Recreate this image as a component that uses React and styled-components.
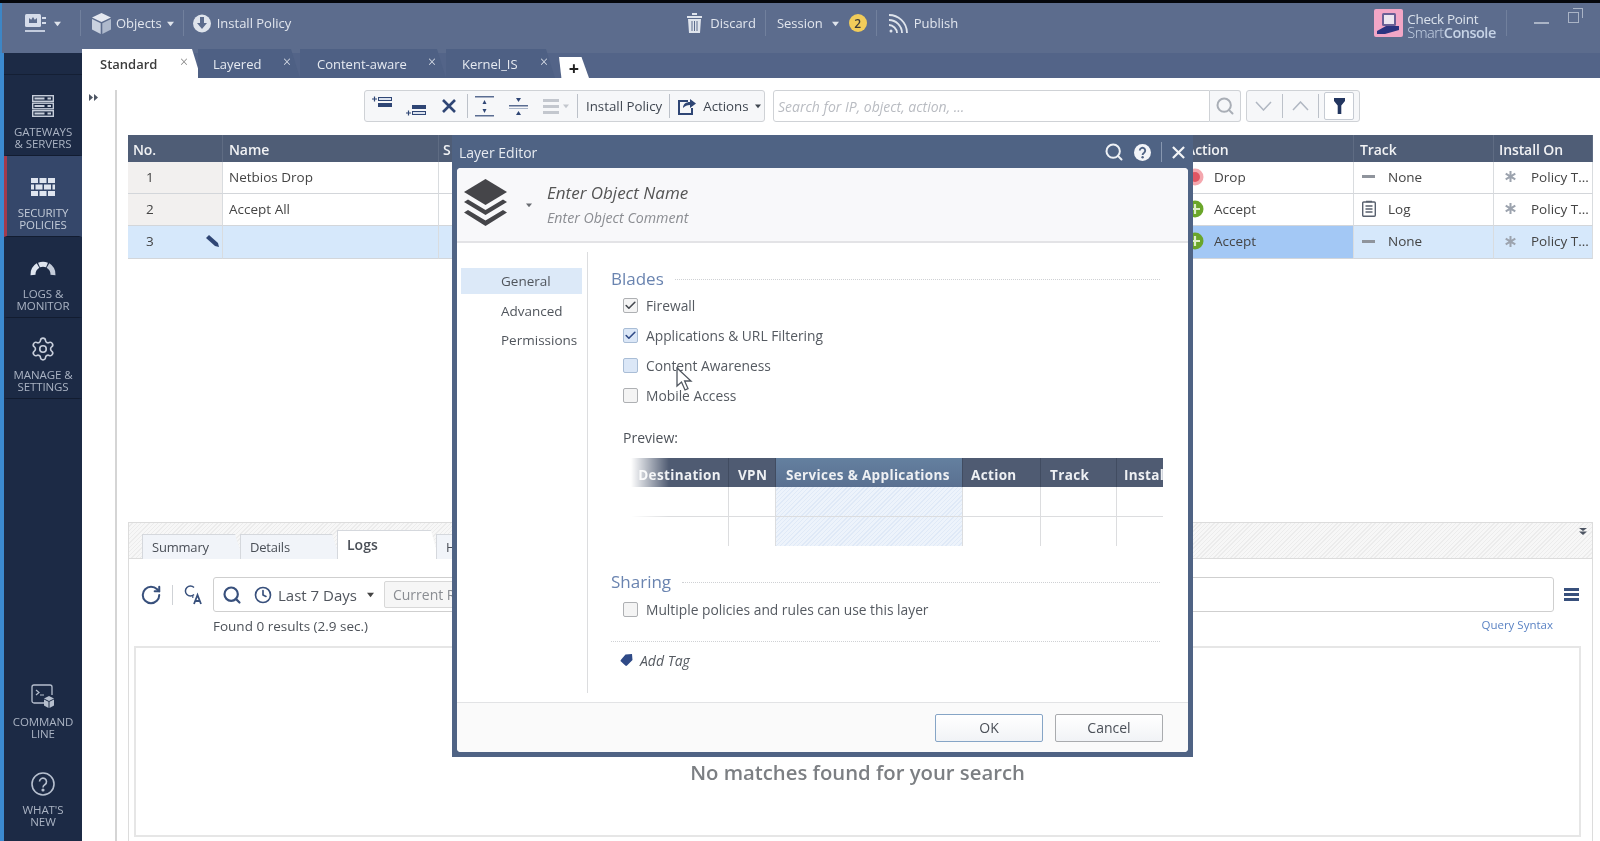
import React from "react";
import styled, { createGlobalStyle } from "styled-components";
import { Search, Clock, Settings, Check, RotateCw } from "lucide-react";

const FONT = `"Open Sans", "Noto Sans", "Liberation Sans", sans-serif`;

const GlobalStyle = createGlobalStyle`
  html, body {
    margin: 0;
    padding: 0;
    height: 100%;
    overflow: hidden;
    background: #fff;
  }
  * { box-sizing: border-box; }
`;

const Caret = ({ color = "#dfe4ec", size = 7 }) => (
  <svg width={size} height={size} viewBox="0 0 8 8">
    <path d="M0 2h8L4 7z" fill={color} />
  </svg>
);

const ConsoleIcon = () => (
  <svg width="22" height="19" viewBox="0 0 22 19">
    <rect x="0" y="0" width="16" height="13" rx="1.500" fill="#d5dcea" />
    <path d="M4 4l2.200 1.800L8 3l1.800 2.800L12 4v5H4z" fill="#5c6c8d" />
    <rect x="0" y="16" width="20" height="2" fill="#c3ccdd" />
    <rect x="17" y="3" width="4" height="2" fill="#d5dcea" />
    <rect x="17" y="8" width="4" height="2" fill="#d5dcea" />
  </svg>
);

const CubeIcon = () => (
  <svg width="19" height="21" viewBox="0 0 19 21">
    <path d="M9.500 0L19 4.500 9.500 9 0 4.500z" fill="#e4e8f0" />
    <path d="M0 6l8.700 4.200V21L0 16.400z" fill="#c9d1df" />
    <path d="M19 6l-8.700 4.200V21l8.700-4.600z" fill="#aeb9cc" />
  </svg>
);

const InstallIcon = () => (
  <svg width="18" height="19" viewBox="0 0 18 19">
    <circle cx="9" cy="9.500" r="9" fill="#dfe4ec" />
    <path d="M7 3h4v6h3l-5 6-5-6h3z" fill="#5c6c8d" />
  </svg>
);

const TrashIcon = () => (
  <svg width="15" height="20" viewBox="0 0 15 20">
    <path d="M5 2h5V0H5zM0 3h15v2H0zM1 6h13l-1 14H2z" fill="#dfe4ec" />
    <path d="M5 8v10M7.500 8v10M10 8v10" stroke="#5c6c8d" strokeWidth="1" />
  </svg>
);

const PublishIcon = () => (
  <svg width="21" height="20" viewBox="0 0 21 20" fill="none" stroke="#dfe4ec" strokeWidth="1.800">
    <path d="M1 2c9 0 18 7 18 18M1 7c7 0 13 6 13 13M1 12c4 0 8 4 8 8" />
    <circle cx="3" cy="18" r="1.500" fill="#dfe4ec" stroke="none" />
  </svg>
);

const LogoIcon = () => (
  <svg width="29" height="28" viewBox="0 0 29 28">
    <rect width="29" height="28" rx="2" fill="#f2a6c6" />
    <rect x="8" y="4" width="14" height="13" rx="1.500" fill="#6a5f96" />
    <rect x="10" y="6" width="10" height="9" fill="#ece6f0" />
    <path d="M3 22l9-5h13v4l-14 4-8 0z" fill="#2c3480" />
  </svg>
);

const GatewaysIcon = () => (
  <svg width="22" height="22" viewBox="0 0 22 22">
    {[0, 7.5, 15].map((y) => (
      <g key={y}>
        <rect x="0.700" y={y + 0.7} width="20.600" height="5.600" fill="none" stroke="#c6cdda" strokeWidth="1.400" />
        <rect x="2.500" y={y + 2.5} width="10" height="2" fill="#c6cdda" />
        <rect x="15.500" y={y + 2.5} width="3.500" height="2" fill="#c6cdda" />
      </g>
    ))}
  </svg>
);

const WallIcon = () => (
  <svg width="24" height="18" viewBox="0 0 24 18" fill="#dfe5ef">
    <rect x="0" y="0" width="7" height="5" />
    <rect x="8.500" y="0" width="7" height="5" />
    <rect x="17" y="0" width="7" height="5" />
    <rect x="0" y="6.500" width="3" height="5" />
    <rect x="4.500" y="6.500" width="7" height="5" />
    <rect x="13" y="6.500" width="7" height="5" />
    <rect x="21.500" y="6.500" width="2.500" height="5" />
    <rect x="0" y="13" width="7" height="5" />
    <rect x="8.500" y="13" width="7" height="5" />
    <rect x="17" y="13" width="7" height="5" />
  </svg>
);

const GaugeIcon = () => (
  <svg width="26" height="16" viewBox="0 0 26 16" fill="none" strokeWidth="5">
    <path d="M3 15A10.500 10.500 0 0 1 8 5.500" stroke="#dfe5ef" />
    <path d="M9 5A10.500 10.500 0 0 1 17 5" stroke="#dfe5ef" />
    <path d="M18 5.500A10.500 10.500 0 0 1 23 15" stroke="#c3cbd9" />
  </svg>
);

const TerminalIcon = () => (
  <svg width="24" height="24" viewBox="0 0 24 24" fill="none">
    <path d="M13 19H3a2 2 0 0 1-2-2V3a2 2 0 0 1 2-2h16a2 2 0 0 1 2 2v8" stroke="#b6bfce" strokeWidth="1.300" />
    <path d="M5 6l3 2.500L5 11M9 11h4" stroke="#b6bfce" strokeWidth="1.200" />
    <path d="M18 12l5 2.500-5 2.500-5-2.500z" fill="#b6bfce" />
    <path d="M13 15.500l4.500 2.200V24L13 21.500zM23 15.500l-4.500 2.200V24l4.500-2.500z" fill="#b6bfce" />
  </svg>
);

const HelpRingIcon = () => (
  <svg width="24" height="24" viewBox="0 0 24 24" fill="none" stroke="#b6bfce" strokeWidth="1.600">
    <circle cx="12" cy="12" r="11" />
    <path d="M8.500 9.500a3.500 3.500 0 1 1 5.500 3c-1.300.8-2 1.400-2 3" />
    <circle cx="12" cy="18" r="0.800" fill="#b6bfce" />
  </svg>
);

const AddRowIcon = ({ below }) => (
  <svg width="21" height="24" viewBox="0 0 21 24">
    {below ? (
      <>
        <rect x="6" y="11" width="14" height="4" fill="#2f4675" />
        <rect x="6.500" y="17.500" width="13" height="3" fill="#dbe2ee" stroke="#2f4675" />
        <path d="M0 19h5M2.500 16.500v5" stroke="#2f4675" strokeWidth="1.200" />
      </>
    ) : (
      <>
        <rect x="6.500" y="3.500" width="13" height="3" fill="#dbe2ee" stroke="#2f4675" />
        <rect x="6" y="9" width="14" height="4" fill="#2f4675" />
        <path d="M0 5h5M2.500 2.500v5" stroke="#2f4675" strokeWidth="1.200" />
      </>
    )}
  </svg>
);

const CrossIcon = ({ color = "#2f4675", size = 14, weight = 2.6 }) => (
  <svg width={size} height={size} viewBox="0 0 14 14">
    <path d="M1 1l12 12M13 1L1 13" stroke={color} strokeWidth={weight} />
  </svg>
);

const ExpandIcon = ({ collapse }) => (
  <svg width="19" height="21" viewBox="0 0 19 21" fill="#2f4675">
    {collapse ? (
      <>
        <path d="M9.500 6L7 2h5z" />
        <path d="M9.500 15L7 19h5z" />
        <rect x="0" y="9" width="19" height="1.500" fill="#5a6d92" />
        <rect x="0" y="12" width="19" height="1" fill="#a9b5c9" />
      </>
    ) : (
      <>
        <rect x="0" y="0" width="19" height="1.500" fill="#5a6d92" />
        <rect x="0" y="19" width="19" height="1.500" fill="#5a6d92" />
        <path d="M9.500 4L7.500 8h4z" />
        <path d="M9.500 17L7.500 13h4z" />
      </>
    )}
  </svg>
);

const ListIcon = () => (
  <svg width="16" height="15" viewBox="0 0 16 15" fill="#c3c7ce">
    <rect width="16" height="3" />
    <rect y="6" width="16" height="3" />
    <rect y="12" width="16" height="3" />
  </svg>
);

const ActionsIcon = () => (
  <svg width="19" height="18" viewBox="0 0 19 18" fill="none" stroke="#2f4675" strokeWidth="2">
    <path d="M10 4H1v13h13v-6" />
    <path d="M5 11c0-4 3-6 7-6V2l6 4.500L12 11V8c-3 0-5 1-7 3z" fill="#2f4675" stroke="none" />
  </svg>
);

const Chevron = ({ up }) => (
  <svg width="17" height="10" viewBox="0 0 17 10" fill="none" stroke="#b0b7c2" strokeWidth="1.500">
    <path d={up ? "M1 9l7.500-8L16 9" : "M1 1l7.500 8L16 1"} />
  </svg>
);

const FunnelIcon = () => (
  <svg width="11" height="16" viewBox="0 0 11 16" fill="#22355f">
    <path d="M0 0h11v3L7.300 7.500V16H3.700V7.500L0 3z" />
  </svg>
);

const PencilIcon = () => (
  <svg width="13" height="12" viewBox="0 0 13 12">
    <path d="M0 3L3 0l9 8 1 4-4-1z" fill="#2f4675" />
  </svg>
);

const DoubleTriangle = () => (
  <svg width="8" height="7" viewBox="0 0 8 7" fill="#4d5563">
    <path d="M0 0h8L4 3zM0 3.500h8L4 7z" />
  </svg>
);

const RailMark = () => (
  <svg width="9" height="7" viewBox="0 0 9 7" fill="#4d5563">
    <path d="M0 0l4 3.500L0 7zM5 0l4 3.500L5 7z" />
  </svg>
);

const ActionDot = ({ kind }) => (
  <svg width="18" height="18" viewBox="0 0 18 18">
    {kind === "drop" ? (
      <>
        <circle cx="9" cy="9" r="8.500" fill="#f4a7ae" />
        <circle cx="9" cy="9" r="5" fill="#e05563" />
      </>
    ) : (
      <>
        <circle cx="9" cy="9" r="8.500" fill="#6aa62a" />
        <path d="M9 4v10M4 9h10" stroke="#dff0c8" strokeWidth="2.200" />
      </>
    )}
  </svg>
);

const LogIcon = () => (
  <svg width="14" height="17" viewBox="0 0 14 17" fill="none" stroke="#58606e" strokeWidth="1.400">
    <rect x="0.700" y="2" width="12.600" height="14.300" rx="1" />
    <path d="M4 1.500h6M3.500 6h7M3.500 9h7M3.500 12h7" />
  </svg>
);

const StarIcon = () => (
  <svg width="11" height="11" viewBox="0 0 11 11" stroke="#9ca3ae" strokeWidth="2">
    <path d="M5.500 0v11M0.700 2.700l9.600 5.600M10.300 2.700L0.700 8.300" />
  </svg>
);

const HelpFilled = () => (
  <svg width="17" height="17" viewBox="0 0 17 17">
    <circle cx="8.500" cy="8.500" r="8.500" fill="#f2f4f8" />
    <path d="M5.800 6.500a2.700 2.700 0 1 1 4.300 2.200c-1 .7-1.500 1.100-1.500 2.300" stroke="#4f6384" strokeWidth="1.900" fill="none" />
    <circle cx="8.600" cy="13.300" r="1.200" fill="#4f6384" />
  </svg>
);

const LayersIcon = () => (
  <svg width="43" height="47" viewBox="0 0 43 47" fill="#454549">
    <path d="M21.500 0L43 13 21.500 26 0 13z" />
    <path d="M4 20.500l17.500 10.500L39 20.500l4 2.500-21.500 13L0 23z" />
    <path d="M4 31l17.500 10.500L39 31l4 2.500L21.500 47 0 33.500z" />
  </svg>
);

const TagIcon = () => (
  <svg width="13" height="12" viewBox="0 0 13 12">
    <path d="M5.500 0.500L12 0l.500 6L7 11.500a1.200 1.200 0 0 1-1.700 0L1 7.500a1.200 1.200 0 0 1 0-1.700z" fill="#2f4a87" />
  </svg>
);

const SearchLetterIcon = () => (
  <svg width="21" height="21" viewBox="0 0 21 21" fill="none" stroke="#38507c" strokeWidth="1.500">
    <path d="M11 3.500a5 5 0 1 0 0 7" />
    <path d="M9 13l1.500 0" />
    <path d="M11 20l3.500-9 3.500 9M12.200 17h4.600" strokeWidth="1.800" />
  </svg>
);

const PointerIcon = () => (
  <svg width="17" height="24" viewBox="0 0 17 24">
    <path d="M1 1v18l4.500-4 3.500 8 3-1.400-3.400-7.600H15z" fill="#fff" stroke="#50565f" strokeWidth="1.300" />
  </svg>
);

const Page = styled.div`
  position: relative;
  width: 1600px;
  height: 841px;
  overflow: hidden;
  display: flex;
  flex-direction: column;
  font-family: ${FONT};
  color: #444;
  background: #fff;
  filter: blur(0.45px);
`;

const TopEdge = styled.div`
  height: 3px;
  flex: none;
  background: #05070c;
`;

const Header = styled.header`
  height: 50px;
  flex: none;
  display: flex;
  align-items: center;
  padding: 0 0 10px 23px;
  background: #5c6c8d;
  border-left: 2px solid #3d86c6;
  color: #e2e6ee;
  font-size: 13px;
`;

const HeaderItem = styled.div`
  display: flex;
  align-items: center;
  gap: ${(p) => p.$gap || 5}px;
  margin-left: ${(p) => p.$ml || 0}px;
`;

const HeaderDivider = styled.span`
  width: 1px;
  height: 26px;
  margin-left: ${(p) => p.$ml || 0}px;
  background: #71809d;
`;

const Badge = styled.span`
  width: 18px;
  height: 18px;
  margin-left: ${(p) => p.$ml || 0}px;
  border-radius: 50%;
  background: #f1cc5a;
  color: #3b3b3b;
  font-size: 12px;
  font-weight: 600;
  display: flex;
  align-items: center;
  justify-content: center;
`;

const Brand = styled.div`
  width: 78px;
  margin: 6px 0 0 4px;
  display: flex;
  flex-direction: column;
  white-space: nowrap;
  color: #dbe2ec;
`;

const BrandLine = styled.span`
  height: 13px;
  font-size: 13.500px;
  line-height: 13px;
  letter-spacing: -0.3px;
  b {
    font-weight: 600;
  }
`;

const BrandThin = styled(BrandLine)`
  font-size: 14.500px;
  font-weight: 300;
  letter-spacing: -0.5px;
  color: #c6d3e6;
`;

const MinimizeBar = styled.span`
  width: 15px;
  height: 2px;
  margin-left: 27px;
  background: #aab4c6;
`;

const RestoreBox = styled.span`
  position: relative;
  width: 11px;
  height: 11px;
  margin: -12px 0 0 19px;
  border: 1px solid #aab4c6;
  &::after {
    content: "";
    position: absolute;
    top: -5px;
    right: -5px;
    width: 9px;
    height: 9px;
    border-top: 1px solid #aab4c6;
    border-right: 1px solid #aab4c6;
  }
`;

const Body = styled.div`
  flex: 1;
  min-height: 0;
  display: flex;
`;

const Sidebar = styled.nav`
  width: 82px;
  flex: none;
  display: flex;
  flex-direction: column;
  background: #1c2a45;
  border-left: 4px solid #3c8ad0;
`;

const SideTop = styled.div`
  height: 22px;
  flex: none;
  border-bottom: 1px solid #141f34;
`;

const SideItem = styled.div`
  height: 81px;
  flex: none;
  display: flex;
  flex-direction: column;
  align-items: center;
  padding-top: 20px;
  color: ${(p) => (p.$active ? "#c3cbd8" : "#aab3c3")};
  background: ${(p) => (p.$active ? "#35476a" : "transparent")};
  border-left: 3px solid ${(p) => (p.$active ? "#a33a4c" : "transparent")};
  border-right: 3px solid transparent;
  border-bottom: 1px solid ${(p) => (p.$plain ? "transparent" : "#121c30")};
  margin-bottom: ${(p) => (p.$plain ? 7 : 0)}px;
`;

const SideIcon = styled.div`
  height: 22px;
  display: flex;
  align-items: center;
  justify-content: center;
`;

const SideLabel = styled.div`
  margin-top: 9px;
  font-size: 11.500px;
  line-height: 12px;
  text-align: center;
  text-transform: uppercase;
  white-space: nowrap;
  letter-spacing: -0.1px;
`;

const SideSpacer = styled.div`
  flex: 1;
`;

const Main = styled.main`
  flex: 1;
  min-width: 0;
  display: flex;
  flex-direction: column;
`;

const TabStrip = styled.div`
  height: 29px;
  flex: none;
  margin-top: -4px;
  display: flex;
  background: linear-gradient(#5c6c8d 0 4px, #536488 4px);
`;

const Tab = styled.div`
  width: ${(p) => p.$w}px;
  margin-right: ${(p) => p.$overlap || 0}px;
  padding: 0 ${(p) => p.$pr}px 0 ${(p) => p.$pl}px;
  display: flex;
  align-items: center;
  justify-content: space-between;
  font-size: 13px;
  font-weight: ${(p) => (p.$active ? 600 : 400)};
  color: ${(p) => (p.$active ? "#3c3c3c" : "#e6eaf1")};
  background: ${(p) => (p.$active ? "#fff" : "#4e6084")};
  clip-path: polygon(0 0, calc(100% - 9px) 0, 100% 100%, 0 100%);
  span {
    font-size: 14px;
    font-weight: 300;
    margin-top: -4px;
    color: ${(p) => (p.$active ? "#777" : "#e6eaf1")};
  }
`;

const AddTab = styled.div`
  width: 30px;
  height: 21px;
  margin: 8px 0 0 4px;
  display: flex;
  align-items: center;
  justify-content: center;
  background: #fff;
  color: #222;
  font-size: 18px;
  font-weight: 700;
  clip-path: polygon(0 0, 75% 0, 100% 100%, 8% 100%);
`;

const Content = styled.div`
  flex: 1;
  min-height: 0;
  display: flex;
`;

const Rail = styled.div`
  width: 33px;
  flex: none;
  padding: 6px 0 0 7px;
`;

const Workspace = styled.div`
  flex: 1;
  min-width: 0;
  margin-top: 12px;
  padding: 0 7px 0 11px;
  border-left: 2px solid #d5d5d5;
  display: flex;
  flex-direction: column;
`;

const ToolRow = styled.div`
  height: 32px;
  flex: none;
  margin-left: 236px;
  display: flex;
  gap: 8px;
`;

const ToolBox = styled.div`
  display: flex;
  align-items: center;
  height: 32px;
  width: ${(p) => p.$w}px;
  margin-left: ${(p) => p.$ml || 0}px;
  background: #f6f7f9;
  border: 1px solid #cfd2d6;
  border-radius: 3px;
  font-size: 13.300px;
  color: #3f4650;
`;

const ToolSlot = styled.span`
  display: flex;
  align-items: center;
  margin-left: ${(p) => p.$ml || 0}px;
  gap: ${(p) => p.$gap || 0}px;
`;

const ToolDivider = styled.span`
  width: 1px;
  height: 24px;
  margin-left: ${(p) => p.$ml || 0}px;
  background: #bcc1c9;
`;

const SearchField = styled.div`
  flex: 1;
  height: 32px;
  display: flex;
  align-items: center;
  padding-left: 4px;
  background: #fff;
  border: 1px solid #cfd2d6;
  border-radius: 3px 0 0 3px;
  font-size: 14px;
  font-style: italic;
  color: #b9bcc2;
`;

const SearchGroup = styled.div`
  display: flex;
  width: 468px;
`;

const SearchButton = styled.div`
  width: 31px;
  display: flex;
  align-items: center;
  justify-content: center;
  background: #f6f7f9;
  border: 1px solid #cfd2d6;
  border-left: 0;
  border-radius: 0 3px 3px 0;
`;

const FilterButton = styled.span`
  width: 30px;
  height: 28px;
  margin-left: 5px;
  display: flex;
  align-items: center;
  justify-content: center;
  background: #fff;
  border: 1px solid #c6cbd3;
  border-radius: 2px;
`;

const RuleTable = styled.div`
  margin-top: 13px;
  flex: none;
  display: grid;
  grid-template-columns: 95px 216px 741px 174px 140px 99px;
  grid-template-rows: 27px 32px 32px 33px;
`;

const HeadCell = styled.div`
  display: flex;
  align-items: center;
  padding: 1px 0 0 ${(p) => p.$pl ?? 6}px;
  background: #4f5d76;
  color: #f1f2f4;
  font-size: 14px;
  font-weight: 600;
  letter-spacing: -0.1px;
  border-right: 1px solid #5f6c83;
`;

const Cell = styled.div`
  display: flex;
  align-items: center;
  gap: ${(p) => p.$gap || 0}px;
  padding: 0 0 2px ${(p) => p.$pl ?? 6}px;
  font-size: 13.500px;
  color: #444;
  background: ${(p) => p.$bg || "#fff"};
  border-right: 1px solid #d9dcdf;
  border-bottom: 1px solid #d3d6da;
`;

const NoNumber = styled.span`
  flex: 1;
`;

const PencilSlot = styled.span`
  display: flex;
  margin-right: 3px;
`;

const MinusBar = styled.span`
  width: 13px;
  height: 3px;
  background: #8f949c;
`;

const BottomPanel = styled.section`
  flex: 1;
  min-height: 0;
  margin-top: 263px;
  display: flex;
  flex-direction: column;
  border-left: 1px solid #dcdcdc;
  border-right: 1px solid #dcdcdc;
`;

const PanelBar = styled.div`
  height: 37px;
  flex: none;
  display: flex;
  align-items: flex-end;
  padding-left: 13px;
  border-top: 1px solid #dcdcdc;
  border-bottom: 1px solid #dcdcdc;
  background: repeating-linear-gradient(135deg, #f7f7f7 0 2px, #ececec 2px 3px);
`;

const PanelTab = styled.div`
  width: ${(p) => p.$w}px;
  height: ${(p) => (p.$active ? 29 : 25)}px;
  margin-right: -3px;
  margin-bottom: -1px;
  padding-left: 10px;
  display: flex;
  align-items: center;
  font-size: ${(p) => (p.$active ? 14 : 13)}px;
  font-weight: ${(p) => (p.$active ? 600 : 400)};
  letter-spacing: ${(p) => (p.$active ? 0 : -0.2)}px;
  color: #4a4f57;
  background: ${(p) => (p.$active ? "#fff" : "#f1f4f9")};
  box-shadow: inset 1px 1px 0 #d5d8dd;
  clip-path: polygon(0 0, 92% 0, 100% 100%, 0 100%);
`;

const CollapseMark = styled.div`
  margin: 0 0 auto auto;
  padding: 5px 5px 0 0;
  display: flex;
`;

const LogsBar = styled.div`
  height: 35px;
  flex: none;
  margin-top: 18px;
  padding-left: 11px;
  display: flex;
  align-items: center;
`;

const LogsDivider = styled.span`
  width: 1px;
  height: 20px;
  margin: 0 10px 0 10px;
  background: #cfd2d6;
`;

const LogsSearch = styled.div`
  width: 1341px;
  height: 35px;
  margin-left: 9px;
  padding-left: 8px;
  display: flex;
  align-items: center;
  border: 1px solid #cfcfcf;
  border-radius: 3px;
  font-size: 15px;
  color: #50555d;
`;

const CurrentRule = styled.div`
  width: 130px;
  height: 27px;
  margin-left: 10px;
  padding-left: 8px;
  display: flex;
  align-items: center;
  background: #f6f6f6;
  border: 1px solid #d8d8d8;
  border-radius: 2px;
  font-size: 14px;
  color: #8a8d92;
`;

const MenuLines = styled.div`
  width: 15px;
  height: 13px;
  margin-left: 10px;
  border-top: 3px solid #38507c;
  border-bottom: 3px solid #38507c;
  position: relative;
  &::after {
    content: "";
    position: absolute;
    top: 2px;
    left: 0;
    right: 0;
    height: 3px;
    background: #38507c;
  }
`;

const FoundRow = styled.div`
  height: 24px;
  flex: none;
  margin-top: 2px;
  padding: 0 39px 0 84px;
  display: flex;
  align-items: center;
  justify-content: space-between;
  font-size: 13.500px;
  color: #4d5259;
`;

const QueryLink = styled.span`
  margin-top: -4px;
  font-size: 11.500px;
  color: #5b83c4;
`;

const ResultsBox = styled.div`
  flex: 1;
  margin: 8px 11px 4px 5px;
  padding-top: 109px;
  text-align: center;
  border: 2px solid #e6e6e6;
  font-size: 20.300px;
  line-height: 30px;
  font-weight: 600;
  color: #7c7f83;
`;

const Dialog = styled.div`
  position: absolute;
  left: 452px;
  top: 135px;
  width: 741px;
  height: 622px;
  padding: 0 5px 5px;
  display: flex;
  flex-direction: column;
  background: #4f6384;
`;

const DialogTitle = styled.div`
  height: 33px;
  flex: none;
  display: flex;
  align-items: center;
  padding: 1px 3px 0 2px;
  font-size: 14px;
  color: #e6eaf0;
`;

const TitleIcons = styled.div`
  margin-left: auto;
  display: flex;
  align-items: center;
  gap: 10px;
`;

const TitleDivider = styled.span`
  width: 1px;
  height: 20px;
  background: #8797b0;
`;

const DialogCard = styled.div`
  flex: 1;
  min-height: 0;
  display: flex;
  flex-direction: column;
  background: #fff;
  border-radius: 4px;
  overflow: hidden;
`;

const DialogHead = styled.div`
  height: 75px;
  flex: none;
  display: flex;
  align-items: center;
  padding: 0 0 4px 7px;
  background: #f8f8fa;
  border-bottom: 2px solid #e3e3e6;
`;

const LayerCaret = styled.span`
  display: flex;
  margin: 4px 15px 0 19px;
`;

const NameStack = styled.div`
  display: flex;
  flex-direction: column;
  gap: 4px;
  margin-top: 4px;
  font-style: italic;
`;

const NameInput = styled.div`
  font-size: 17px;
  line-height: 22px;
  color: #555;
`;

const CommentInput = styled.div`
  font-size: 14.200px;
  line-height: 20px;
  color: #8b8d92;
`;

const DialogBody = styled.div`
  flex: 1;
  min-height: 0;
  display: flex;
`;

const SideMenu = styled.div`
  width: 131px;
  flex: none;
  margin: 9px 0;
  padding: 16px 5px 0 4px;
  border-right: 1px solid #dcdddf;
`;

const MenuItem = styled.div`
  height: ${(p) => (p.$active ? 26 : 29)}px;
  display: flex;
  align-items: center;
  padding-left: 40px;
  font-size: 13.500px;
  color: #50555c;
  margin-bottom: ${(p) => (p.$active ? 2 : 0)}px;
  background: ${(p) => (p.$active ? "#dce9f8" : "transparent")};
`;

const FormArea = styled.div`
  flex: 1;
  min-width: 0;
  padding: 23px 28px 0 23px;
`;

const SectionHead = styled.div`
  height: 24px;
  display: flex;
  align-items: center;
  gap: 11px;
  margin-top: ${(p) => p.$mt || 0}px;
  font-size: 17px;
  color: #6a84b0;
  &::after {
    content: "";
    flex: 1;
    margin-top: 3px;
    border-top: 1px dotted #cfd1d4;
  }
`;

const CheckRow = styled.div`
  height: 30px;
  display: flex;
  align-items: center;
  gap: 8px;
  margin-top: ${(p) => p.$mt || 0}px;
  padding-left: 12px;
  font-size: 13.800px;
  color: #555a61;
`;

const CheckBox = styled.span`
  width: 15px;
  height: 15px;
  display: flex;
  align-items: center;
  justify-content: center;
  border: 1px solid ${(p) => (p.$blue ? "#a9bdd6" : "#aeb0b3")};
  border-radius: 2px;
  background: ${(p) => (p.$blue ? "#dbe7f7" : "#f4f4f4")};
`;

const PreviewLabel = styled.div`
  height: 20px;
  margin: 17px 0 11px 12px;
  display: flex;
  align-items: center;
  font-size: 14px;
  color: #4d5259;
`;

const PreviewTable = styled.div`
  position: relative;
  width: 532px;
  margin-left: 20px;
  display: grid;
  grid-template-columns: 98px 47px 187px 78px 76px 46px;
  grid-template-rows: 29px 30px 29px;
  &::after {
    content: "";
    position: absolute;
    left: 0;
    top: 0;
    bottom: 0;
    width: 38px;
    background: linear-gradient(90deg, #fff, rgba(255, 255, 255, 0));
  }
`;

const PreviewHead = styled.div`
  display: flex;
  align-items: center;
  justify-content: ${(p) => (p.$end ? "flex-end" : "flex-start")};
  padding: 4px ${(p) => (p.$end ? 7 : 0)}px 0 ${(p) => p.$pl || 0}px;
  overflow: hidden;
  white-space: nowrap;
  background: ${(p) => (p.$hot ? "linear-gradient(#64809f, #5a7091)" : "#4f5b72")};
  border-right: ${(p) => (p.$last ? 0 : 1)}px solid #414c61;
  color: #eef0f3;
  font-size: 13.500px;
  font-weight: 700;
  letter-spacing: 0.35px;
`;

const PreviewCell = styled.div`
  border-right: ${(p) => (p.$last ? 0 : 1)}px solid #dcdddf;
  border-bottom: ${(p) => (p.$bottom ? 0 : 1)}px solid #dcdddf;
  background: ${(p) =>
    p.$hot
      ? "repeating-linear-gradient(135deg, #edf3fb 0 2px, #dfe9f7 2px 3px)"
      : "#fff"};
`;

const DottedRule = styled.div`
  margin-top: 17px;
  border-top: 1px dotted #cfd1d4;
`;

const AddTag = styled.div`
  height: 20px;
  margin: 8px 0 0 9px;
  display: flex;
  align-items: center;
  gap: 7px;
  font-size: 14px;
  font-style: italic;
  color: #555a61;
`;

const DialogFoot = styled.div`
  height: 50px;
  flex: none;
  display: flex;
  align-items: center;
  justify-content: flex-end;
  gap: 12px;
  padding-right: 25px;
  background: #fafafa;
  border-top: 1px solid #e2e3e5;
`;

const FootButton = styled.button`
  width: 108px;
  height: 28px;
  padding: 0;
  font-family: inherit;
  font-size: 14px;
  color: #4a4f57;
  background: linear-gradient(#fff, #f1f3f6);
  border: 1px solid ${(p) => (p.$primary ? "#86a5c6" : "#a9abae")};
  border-radius: 2px;
`;

const Cursor = styled.div`
  position: absolute;
  left: 676px;
  top: 367px;
  display: flex;
`;

const sideItems = [
  { label: ["Gateways", "& Servers"], icon: <GatewaysIcon /> },
  { label: ["Security", "Policies"], icon: <WallIcon />, active: true },
  { label: ["Logs &", "Monitor"], icon: <GaugeIcon /> },
  {
    label: ["Manage &", "Settings"],
    icon: <Settings size={26} strokeWidth={1.5} color="#c6cdda" />,
  },
];

const rules = [
  { no: "1", name: "Netbios Drop", action: "Drop", kind: "drop", track: "None" },
  { no: "2", name: "Accept All", action: "Accept", kind: "accept", track: "Log" },
  { no: "3", name: "", action: "Accept", kind: "accept", track: "None", selected: true },
];

const ruleHeads = [
  { text: "No.", pl: 5 },
  { text: "Name", pl: 6 },
  { text: "S", pl: 4 },
  { text: "Action", pl: 6 },
  { text: "Track", pl: 6 },
  { text: "Install On", pl: 5 },
];

const previewCols = [
  { text: "Destination", end: true },
  { text: "VPN", pl: 9 },
  { text: "Services & Applications", pl: 10, hot: true },
  { text: "Action", pl: 8 },
  { text: "Track", pl: 9 },
  { text: "Install", pl: 7, last: true },
];

function Side({ label, icon, active, plain }) {
  return (
    <SideItem $active={active} $plain={plain}>
      <SideIcon>{icon}</SideIcon>
      <SideLabel>
        {label[0]}
        <br />
        {label[1]}
      </SideLabel>
    </SideItem>
  );
}

export default function App() {
  return (
    <Page>
      <GlobalStyle />
      <TopEdge />
      <Header>
        <HeaderItem $gap={7}>
          <ConsoleIcon />
          <Caret />
        </HeaderItem>
        <HeaderDivider $ml={19} />
        <HeaderItem $ml={11}>
          <CubeIcon />
          <span>Objects</span>
          <Caret />
        </HeaderItem>
        <HeaderDivider $ml={9} />
        <HeaderItem $ml={9} $gap={6}>
          <InstallIcon />
          <span>Install Policy</span>
        </HeaderItem>
        <HeaderItem $ml={396} $gap={8}>
          <TrashIcon />
          <span>Discard</span>
        </HeaderItem>
        <HeaderDivider $ml={9} />
        <HeaderItem $ml={11} $gap={9}>
          <span>Session</span>
          <Caret />
        </HeaderItem>
        <Badge $ml={10}>2</Badge>
        <HeaderDivider $ml={9} />
        <HeaderItem $ml={11} $gap={5}>
          <PublishIcon />
          <span>Publish</span>
        </HeaderItem>
        <HeaderItem $ml={416}>
          <LogoIcon />
        </HeaderItem>
        <Brand>
          <BrandLine>Check Point</BrandLine>
          <BrandThin>
            Smart<b>Console</b>
          </BrandThin>
        </Brand>
        <HeaderDivider $ml={21} />
        <MinimizeBar />
        <RestoreBox />
      </Header>
      <Body>
        <Sidebar>
          <SideTop />
          {sideItems.map((item) => (
            <Side key={item.label[0]} {...item} />
          ))}
          <SideSpacer />
          <Side plain label={["Command", "Line"]} icon={<TerminalIcon />} />
          <Side plain label={["What's", "New"]} icon={<HelpRingIcon />} />
        </Sidebar>
        <Main>
          <TabStrip>
            <Tab $active $w={119} $pl={18} $pr={13} $overlap={-3}>
              Standard <span>×</span>
            </Tab>
            <Tab $w={102} $pl={15} $pr={9}>
              Layered <span>×</span>
            </Tab>
            <Tab $w={146} $pl={17} $pr={10}>
              Content-aware <span>×</span>
            </Tab>
            <Tab $w={109} $pl={16} $pr={7}>
              Kernel_IS <span>×</span>
            </Tab>
            <AddTab>+</AddTab>
          </TabStrip>
          <Content>
            <Rail>
              <RailMark />
            </Rail>
            <Workspace>
              <ToolRow>
                <ToolBox $w={401}>
                  <ToolSlot $ml={7}>
                    <AddRowIcon />
                  </ToolSlot>
                  <ToolSlot $ml={13}>
                    <AddRowIcon below />
                  </ToolSlot>
                  <ToolSlot $ml={15}>
                    <CrossIcon />
                  </ToolSlot>
                  <ToolDivider $ml={11} />
                  <ToolSlot $ml={7}>
                    <ExpandIcon />
                  </ToolSlot>
                  <ToolSlot $ml={15}>
                    <ExpandIcon collapse />
                  </ToolSlot>
                  <ToolSlot $ml={15} $gap={4}>
                    <ListIcon />
                    <Caret color="#c3c7ce" size={6} />
                  </ToolSlot>
                  <ToolDivider $ml={8} />
                  <ToolSlot $ml={8}>Install Policy</ToolSlot>
                  <ToolDivider $ml={7} />
                  <ToolSlot $ml={8} $gap={6}>
                    <ActionsIcon />
                    Actions
                    <Caret color="#3f4650" size={6} />
                  </ToolSlot>
                </ToolBox>
                <SearchGroup>
                  <SearchField>Search for IP, object, action, ...</SearchField>
                  <SearchButton>
                    <Search size={20} strokeWidth={2.4} color="#a9aeb6" />
                  </SearchButton>
                </SearchGroup>
                <ToolBox $w={114} $ml={-3}>
                  <ToolSlot $ml={8}>
                    <Chevron />
                  </ToolSlot>
                  <ToolDivider $ml={10} />
                  <ToolSlot $ml={9}>
                    <Chevron up />
                  </ToolSlot>
                  <ToolDivider $ml={9} />
                  <FilterButton>
                    <FunnelIcon />
                  </FilterButton>
                </ToolBox>
              </ToolRow>
              <RuleTable>
                {ruleHeads.map((head) => (
                  <HeadCell key={head.text} $pl={head.pl}>
                    {head.text}
                  </HeadCell>
                ))}
                {rules.map((rule) => {
                  const rowBg = rule.selected ? "#d6e8fb" : "#fff";
                  return (
                    <React.Fragment key={rule.no}>
                      <Cell $pl={18} $bg={rule.selected ? "#d6e8fb" : "#f2f0ef"}>
                        <NoNumber>{rule.no}</NoNumber>
                        {rule.selected && (
                          <PencilSlot>
                            <PencilIcon />
                          </PencilSlot>
                        )}
                      </Cell>
                      <Cell $bg={rowBg}>{rule.name}</Cell>
                      <Cell $bg={rowBg} />
                      <Cell $pl={6} $gap={10} $bg={rule.selected ? "#a3c8f5" : "#fff"}>
                        <ActionDot kind={rule.kind} />
                        {rule.action}
                      </Cell>
                      <Cell $pl={8} $gap={rule.track === "Log" ? 12 : 13} $bg={rowBg}>
                        {rule.track === "Log" ? <LogIcon /> : <MinusBar />}
                        {rule.track}
                      </Cell>
                      <Cell $pl={11} $gap={15} $bg={rowBg}>
                        <StarIcon />
                        Policy T...
                      </Cell>
                    </React.Fragment>
                  );
                })}
              </RuleTable>
              <BottomPanel>
                <PanelBar>
                  <PanelTab $w={101}>Summary</PanelTab>
                  <PanelTab $w={100}>Details</PanelTab>
                  <PanelTab $w={102} $active>
                    Logs
                  </PanelTab>
                  <PanelTab $w={60}>H</PanelTab>
                  <CollapseMark>
                    <DoubleTriangle />
                  </CollapseMark>
                </PanelBar>
                <LogsBar>
                  <RotateCw size={22} strokeWidth={2.2} color="#38507c" />
                  <LogsDivider />
                  <SearchLetterIcon />
                  <LogsSearch>
                    <Search size={20} strokeWidth={2.6} color="#38507c" />
                    <ToolSlot $ml={12} $gap={6}>
                      <Clock size={18} strokeWidth={2.2} color="#38507c" />
                      Last 7 Days
                    </ToolSlot>
                    <ToolSlot $ml={10}>
                      <Caret color="#444" />
                    </ToolSlot>
                    <CurrentRule>Current Rule</CurrentRule>
                  </LogsSearch>
                  <MenuLines />
                </LogsBar>
                <FoundRow>
                  <span>Found 0 results (2.9 sec.)</span>
                  <QueryLink>Query Syntax</QueryLink>
                </FoundRow>
                <ResultsBox>No matches found for your search</ResultsBox>
              </BottomPanel>
            </Workspace>
          </Content>
        </Main>
      </Body>

      <Dialog>
        <DialogTitle>
          Layer Editor
          <TitleIcons>
            <Search size={20} strokeWidth={2.4} color="#eef1f5" />
            <HelpFilled />
            <TitleDivider />
            <CrossIcon color="#f2f4f7" size={13} weight={2.4} />
          </TitleIcons>
        </DialogTitle>
        <DialogCard>
          <DialogHead>
            <LayersIcon />
            <LayerCaret>
              <Caret color="#6a6d72" size={6} />
            </LayerCaret>
            <NameStack>
              <NameInput>Enter Object Name</NameInput>
              <CommentInput>Enter Object Comment</CommentInput>
            </NameStack>
          </DialogHead>
          <DialogBody>
            <SideMenu>
              <MenuItem $active>General</MenuItem>
              <MenuItem>Advanced</MenuItem>
              <MenuItem>Permissions</MenuItem>
            </SideMenu>
            <FormArea>
              <SectionHead>Blades</SectionHead>
              <CheckRow>
                <CheckBox>
                  <Check size={13} strokeWidth={3} color="#44484f" />
                </CheckBox>
                Firewall
              </CheckRow>
              <CheckRow>
                <CheckBox $blue>
                  <Check size={13} strokeWidth={3} color="#2f4a87" />
                </CheckBox>
                Applications &amp; URL Filtering
              </CheckRow>
              <CheckRow>
                <CheckBox $blue />
                Content Awareness
              </CheckRow>
              <CheckRow>
                <CheckBox />
                Mobile Access
              </CheckRow>
              <PreviewLabel>Preview:</PreviewLabel>
              <PreviewTable>
                {previewCols.map((col) => (
                  <PreviewHead
                    key={col.text}
                    $hot={col.hot}
                    $end={col.end}
                    $pl={col.pl}
                    $last={col.last}
                  >
                    {col.text}
                  </PreviewHead>
                ))}
                {[0, 1].map((row) =>
                  previewCols.map((col) => (
                    <PreviewCell
                      key={col.text + row}
                      $hot={col.hot}
                      $last={col.last}
                      $bottom={row === 1}
                    />
                  ))
                )}
              </PreviewTable>
              <SectionHead $mt={23}>Sharing</SectionHead>
              <CheckRow $mt={1}>
                <CheckBox />
                Multiple policies and rules can use this layer
              </CheckRow>
              <DottedRule />
              <AddTag>
                <TagIcon />
                Add Tag
              </AddTag>
            </FormArea>
          </DialogBody>
          <DialogFoot>
            <FootButton $primary>OK</FootButton>
            <FootButton>Cancel</FootButton>
          </DialogFoot>
        </DialogCard>
      </Dialog>

      <Cursor>
        <PointerIcon />
      </Cursor>
    </Page>
  );
}
